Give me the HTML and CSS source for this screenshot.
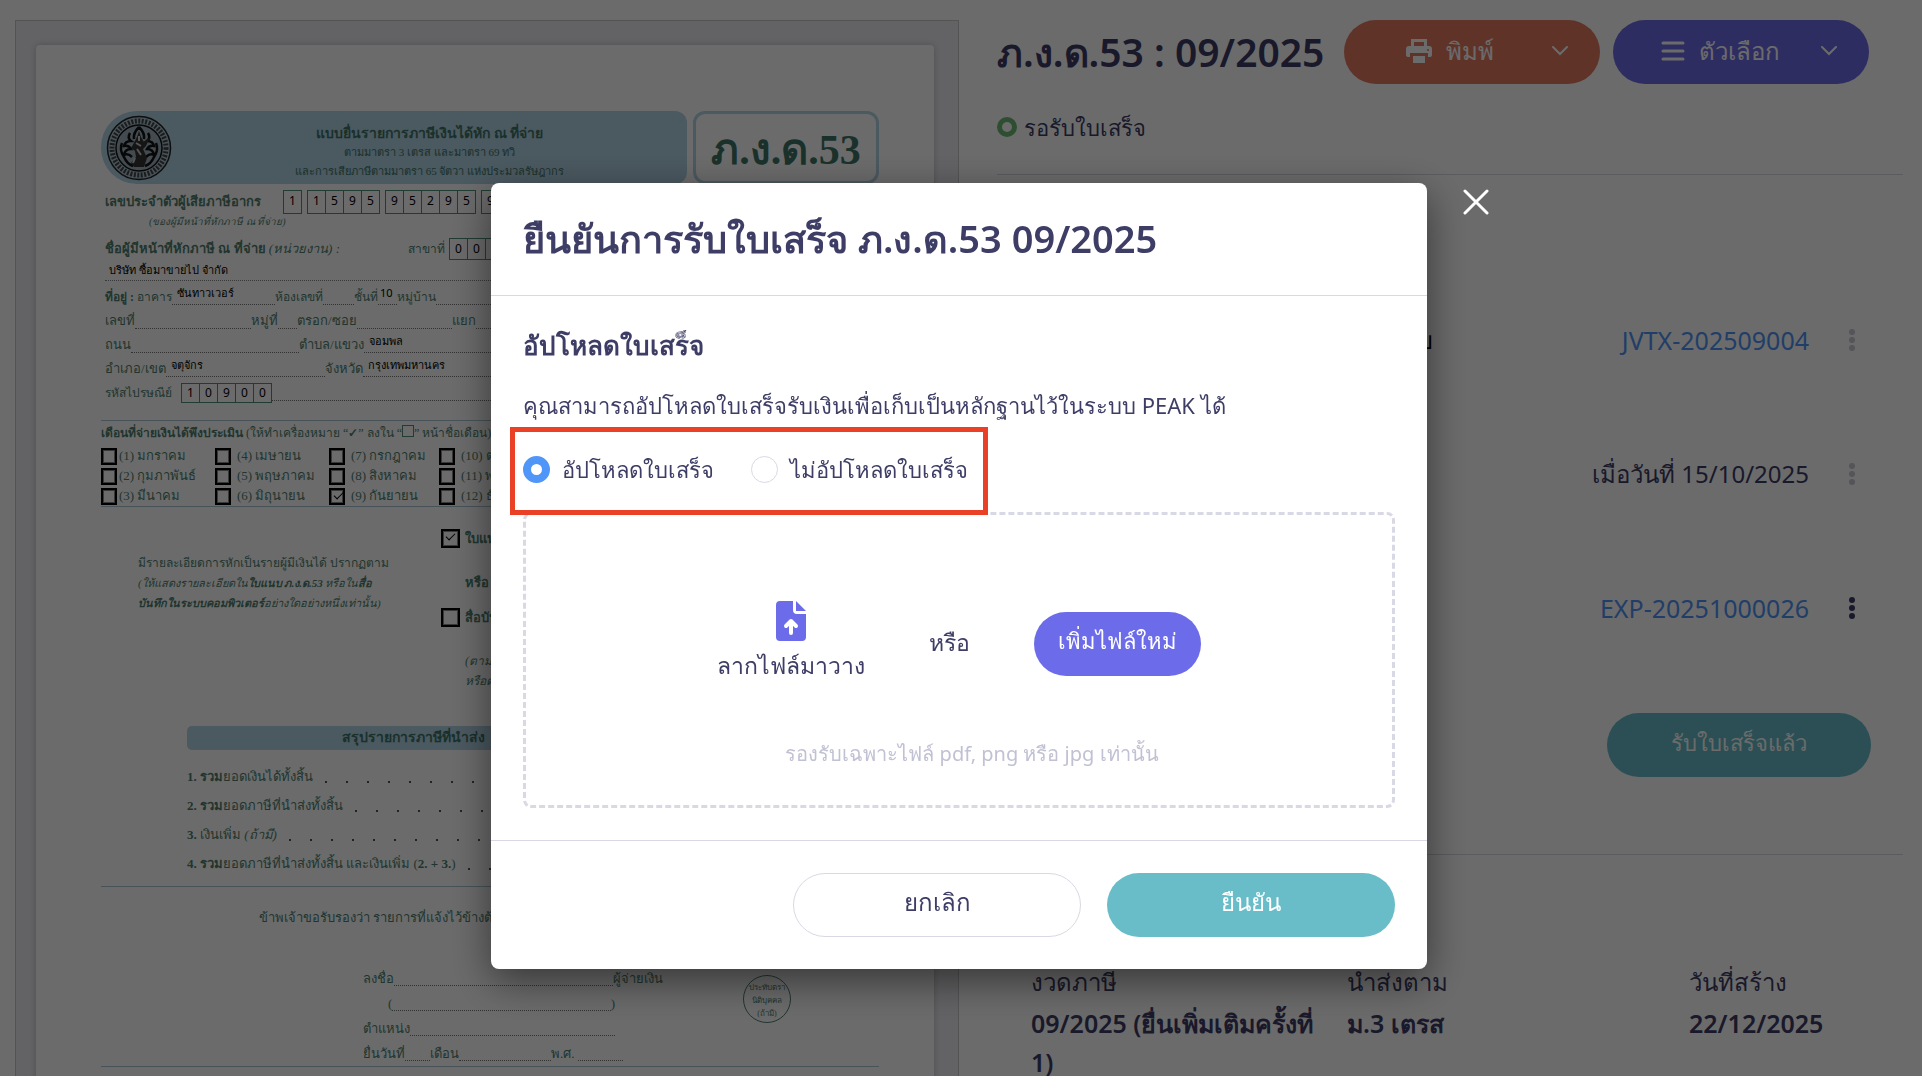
FILE: index.html
```
<!DOCTYPE html>
<html lang="th">
<head>
    <meta charset="UTF-8">
    <meta name="viewport" content="width=device-width, initial-scale=1.0">
    <title>ภ.ง.ด.53 : 09/2025</title>
    <link rel="stylesheet" href="styles.css">
</head>
<body>
    <div class="page">
        <!-- document preview -->
        <section class="preview">
            <div class="paper">
                <header class="form-head">
                    <div class="band">
                        <svg class="seal" viewBox="0 0 66 66">
                            <circle cx="33" cy="33" r="31.5" fill="#a9c6d4" stroke="#222" stroke-width="1.5"/>
                            <circle cx="33" cy="33" r="27" fill="none" stroke="#444" stroke-width="5" stroke-dasharray="2 1.5"/>
                            <circle cx="33" cy="33" r="23" fill="#9fb4c0" stroke="#111" stroke-width="1.5"/>
                            <path d="M33 12q-6 6-5 12M33 12q6 6 5 12M24 18q-3 5 1 8q-6 0-7 5q5-1 7 3q-6 0-7 6q4-2 8 2M42 18q3 5-1 8q6 0 7 5q-5-1-7 3q6 0 7 6q-4-2-8 2M16 28q-3 7 2 14q3 7 9 9M50 28q3 7-2 14q-3 7-9 9" fill="none" stroke="#111" stroke-width="2.5"/>
                            <path d="M31 22l2-6 2 6 3 5 6-5-4 9-3 3 4 9-3 9H28l-3-4 5-6-1-6-4-3 4-7z" fill="#333"/>
                            <path d="M33 21v5M30 28l5 3M31 34l4 6M29 43l-2 5" stroke="#ccc" stroke-width="2"/>
                        </svg>
                        <div class="band-text">
                            <strong>แบบยื่นรายการภาษีเงินได้หัก ณ ที่จ่าย</strong>
                            <span>ตามมาตรา 3 เตรส และมาตรา 69 ทวิ</span>
                            <span>และการเสียภาษีตามมาตรา 65 จัตวา แห่งประมวลรัษฎากร</span>
                        </div>
                    </div>
                    <div class="form-no">ภ.ง.ด.53</div>
                </header>

                <div class="tax-row">
                    <strong class="tax-label">เลขประจำตัวผู้เสียภาษีอากร</strong>
                    <div class="cells"><span>1</span></div>
                    <div class="cells"><span>1</span><span>5</span><span>9</span><span>5</span></div>
                    <div class="cells"><span>9</span><span>5</span><span>2</span><span>9</span><span>5</span></div>
                    <div class="cells"><span>9</span></div>
                </div>
                <em class="tax-note">(ของผู้มีหน้าที่หักภาษี ณ ที่จ่าย)</em>

                <div class="name-row">
                    <span class="name-label"><strong>ชื่อผู้มีหน้าที่หักภาษี ณ ที่จ่าย</strong> <em>(หน่วยงาน) :</em></span>
                    <span class="branch">สาขาที่</span>
                    <div class="cells"><span>0</span><span>0</span><span>0</span></div>
                </div>
                <div class="company">บริษัท ซื้อมาขายไป จำกัด</div>

                <div class="fields fields-building">
                    <div class="field"><span><strong>ที่อยู่ :</strong> อาคาร</span><i>ซันทาวเวอร์</i></div>
                    <div class="field"><span>ห้องเลขที่</span><i></i></div>
                    <div class="field"><span>ชั้นที่</span><i class="tight">10</i></div>
                    <div class="field"><span>หมู่บ้าน</span><i></i></div>
                </div>
                <div class="fields fields-number">
                    <div class="field"><span>เลขที่</span><i></i></div>
                    <div class="field"><span>หมู่ที่</span><i></i></div>
                    <div class="field"><span>ตรอก/ซอย</span><i></i></div>
                    <div class="field"><span>แยก</span><i></i></div>
                </div>
                <div class="fields fields-road">
                    <div class="field"><span>ถนน</span><i></i></div>
                    <div class="field"><span>ตำบล/แขวง</span><i>จอมพล</i></div>
                </div>
                <div class="fields fields-district">
                    <div class="field"><span>อำเภอ/เขต</span><i>จตุจักร</i></div>
                    <div class="field"><span>จังหวัด</span><i>กรุงเทพมหานคร</i></div>
                </div>
                <div class="fields fields-post">
                    <span>รหัสไปรษณีย์</span>
                    <div class="cells"><span>1</span><span>0</span><span>9</span><span>0</span><span>0</span></div>
                    <div class="field"><i></i></div>
                </div>

                <div class="months">
                    <p><strong>เดือนที่จ่ายเงินได้พึงประเมิน</strong> (ให้ทำเครื่องหมาย “<b>✓</b>” ลงใน “<span class="mini-box"></span>” หน้าชื่อเดือน) พ.ศ.</p>
                    <div class="month-grid">
                        <label><input type="checkbox">(1) มกราคม</label>
                        <label><input type="checkbox">(4) เมษายน</label>
                        <label><input type="checkbox">(7) กรกฎาคม</label>
                        <label><input type="checkbox">(10) ตุลาคม</label>
                        <label><input type="checkbox">(2) กุมภาพันธ์</label>
                        <label><input type="checkbox">(5) พฤษภาคม</label>
                        <label><input type="checkbox">(8) สิงหาคม</label>
                        <label><input type="checkbox">(11) พฤศจิกายน</label>
                        <label><input type="checkbox">(3) มีนาคม</label>
                        <label><input type="checkbox">(6) มิถุนายน</label>
                        <label><input type="checkbox" checked>(9) กันยายน</label>
                        <label><input type="checkbox">(12) ธันวาคม</label>
                    </div>
                </div>

                <div class="attach">
                    <div class="attach-info">
                        <p>มีรายละเอียดการหักเป็นรายผู้มีเงินได้ ปรากฏตาม</p>
                        <p class="small"><em>(ให้แสดงรายละเอียดใน<strong>ใบแนบ ภ.ง.ด.53</strong> หรือใน<strong>สื่อ</strong></em></p>
                        <p class="small"><em><strong>บันทึกในระบบคอมพิวเตอร์</strong>อย่างใดอย่างหนึ่งเท่านั้น)</em></p>
                    </div>
                    <div class="attach-list">
                        <label><input type="checkbox" checked><strong>ใบแนบ</strong></label>
                        <strong class="or">หรือ</strong>
                        <label><input type="checkbox"><strong>สื่อบันทึก</strong></label>
                        <em class="under">(ตามหนังสือ<br>หรือตาม</em>
                    </div>
                </div>

                <div class="summary">
                    <h3>สรุปรายการภาษีที่นำส่ง</h3>
                    <p><span><strong>1. รวม</strong>ยอดเงินได้ทั้งสิ้น</span><i class="dots"></i></p>
                    <p><span><strong>2. รวม</strong>ยอดภาษีที่นำส่งทั้งสิ้น</span><i class="dots"></i></p>
                    <p><span><strong>3.</strong> เงินเพิ่ม <em>(ถ้ามี)</em></span><i class="dots"></i></p>
                    <p><span><strong>4. รวม</strong>ยอดภาษีที่นำส่งทั้งสิ้น และเงินเพิ่ม (<strong>2. + 3.</strong>)</span><i class="dots"></i></p>
                </div>

                <div class="certify">
                    <p>ข้าพเจ้าขอรับรองว่า รายการที่แจ้งไว้ข้างต้น</p>
                    <div class="signing">
                        <div class="sign-lines">
                            <div class="field payer"><span>ลงชื่อ</span><i></i><span>ผู้จ่ายเงิน</span></div>
                            <div class="field bracket"><span>(</span><i></i><span>)</span></div>
                            <div class="field position"><span>ตำแหน่ง</span><i></i></div>
                            <div class="filing">
                                <div class="field"><span>ยื่นวันที่</span><i></i></div>
                                <div class="field"><span>เดือน</span><i></i></div>
                                <div class="field"><span>พ.ศ.&nbsp;</span><i></i></div>
                            </div>
                        </div>
                        <div class="stamp">ประทับตรา<br>นิติบุคคล<br>(ถ้ามี)</div>
                    </div>
                </div>
            </div>
        </section>

        <!-- document details -->
        <section class="detail">
            <div class="top">
                <div class="titles">
                    <h1>ภ.ง.ด.53 : 09/2025</h1>
                    <div class="status"><span class="ring"></span>รอรับใบเสร็จ</div>
                </div>
                <div class="actions">
                    <button type="button" class="btn btn-print">
                        <svg width="26" height="24" viewBox="0 0 26 24"><path d="M5 0h16v8h-3V3H8v5H5zM3 7h20q3 0 3 3v6q0 2-3 2h-1v-4H4v4H3q-3 0-3-2v-6q0-3 3-3zM7 17h12v7H7z" fill="currentColor"/><circle cx="22" cy="11" r="1" fill="#e57a62"/></svg>
                        <span>พิมพ์</span>
                        <svg class="chev" width="16" height="10" viewBox="0 0 16 10"><path d="M1 1l7 7 7-7" fill="none" stroke="currentColor" stroke-width="2" stroke-linecap="round"/></svg>
                    </button>
                    <button type="button" class="btn btn-option">
                        <svg width="24" height="20" viewBox="0 0 24 20"><path d="M2 2h20M2 10h20M2 18h20" stroke="currentColor" stroke-width="3" stroke-linecap="round"/></svg>
                        <span>ตัวเลือก</span>
                        <svg class="chev" width="16" height="10" viewBox="0 0 16 10"><path d="M1 1l7 7 7-7" fill="none" stroke="currentColor" stroke-width="2" stroke-linecap="round"/></svg>
                    </button>
                </div>
            </div>

            <div class="steps">
                <div class="step">
                    <span class="step-name">ย</span>
                    <a href="#">JVTX-202509004</a>
                    <button type="button" class="more" aria-label="เพิ่มเติม" disabled><svg width="6" height="22" viewBox="0 0 6 22"><circle cx="3" cy="3" r="3"/><circle cx="3" cy="11" r="3"/><circle cx="3" cy="19" r="3"/></svg></button>
                </div>
                <div class="step">
                    <span>เมื่อวันที่ 15/10/2025</span>
                    <button type="button" class="more" aria-label="เพิ่มเติม" disabled><svg width="6" height="22" viewBox="0 0 6 22"><circle cx="3" cy="3" r="3"/><circle cx="3" cy="11" r="3"/><circle cx="3" cy="19" r="3"/></svg></button>
                </div>
                <div class="step">
                    <a href="#">EXP-20251000026</a>
                    <button type="button" class="more" aria-label="เพิ่มเติม"><svg width="6" height="22" viewBox="0 0 6 22"><circle cx="3" cy="3" r="3"/><circle cx="3" cy="11" r="3"/><circle cx="3" cy="19" r="3"/></svg></button>
                </div>
                <button type="button" class="btn btn-received">รับใบเสร็จแล้ว</button>
            </div>

            <dl class="info">
                <div><dt>งวดภาษี</dt><dd>09/2025 (ยื่นเพิ่มเติมครั้งที่ 1)</dd></div>
                <div><dt>นำส่งตาม</dt><dd>ม.3 เตรส</dd></div>
                <div><dt>วันที่สร้าง</dt><dd>22/12/2025</dd></div>
            </dl>
        </section>
    </div>

    <!-- receipt confirm popup -->
    <div class="overlay">
        <div class="modal" role="dialog" aria-labelledby="modal-title">
            <button type="button" class="close" aria-label="ปิด">
                <svg width="26" height="26" viewBox="0 0 26 26"><path d="M2 2l22 22M24 2L2 24" stroke="#fff" stroke-width="3" stroke-linecap="round"/></svg>
            </button>
            <div class="modal-head">
                <h2 id="modal-title">ยืนยันการรับใบเสร็จ ภ.ง.ด.53 09/2025</h2>
            </div>
            <form class="modal-body" action="#">
                <h3>อัปโหลดใบเสร็จ</h3>
                <p>คุณสามารถอัปโหลดใบเสร็จรับเงินเพื่อเก็บเป็นหลักฐานไว้ในระบบ PEAK ได้</p>
                <div class="choices">
                    <label for="upload"><input type="radio" name="receipt" id="upload" checked>อัปโหลดใบเสร็จ</label>
                    <label for="noupload"><input type="radio" name="receipt" id="noupload">ไม่อัปโหลดใบเสร็จ</label>
                </div>
                <div class="dropzone">
                    <div class="drop-row">
                        <div class="drag">
                            <svg width="30" height="40" viewBox="0 0 30 40"><path d="M4 0h13v9q0 4 4 4h9v23q0 4-4 4H4q-4 0-4-4V4q0-4 4-4z" fill="#6c6cea"/><path d="M20 0l10 10H20z" fill="#6c6cea"/><path d="M15 32V20M10 25l5-5 5 5" fill="none" stroke="#fff" stroke-width="4" stroke-linecap="round" stroke-linejoin="round"/></svg>
                            <span>ลากไฟล์มาวาง</span>
                        </div>
                        <span>หรือ</span>
                        <button type="button" class="btn btn-file">เพิ่มไฟล์ใหม่</button>
                    </div>
                    <small>รองรับเฉพาะไฟล์ pdf, png หรือ jpg เท่านั้น</small>
                </div>
            </form>
            <div class="modal-foot">
                <button type="button" class="btn btn-cancel">ยกเลิก</button>
                <button type="button" class="btn btn-confirm">ยืนยัน</button>
            </div>
        </div>
    </div>
</body>
</html>
```
FILE: styles.css
```
*, *::before, *::after {
    box-sizing: border-box;
}

body {
    margin: 0;
    height: 100vh;
    overflow: hidden;
    background-color: white;
    color: #3d3d66;
    font-family: "Noto Sans", sans-serif;
    font-size: 22px;
    line-height: 36px;
}

h1, h2, h3, p, dl, dd {
    margin: 0;
}

a {
    color: #5095f8;
    text-decoration: none;
}

button {
    font-family: inherit;
    font-size: inherit;
    line-height: inherit;
    padding: 0;
    border: none;
    background: none;
}

.btn {
    height: 64px;
    border-radius: 32px;
    color: white;
    padding-bottom: 6px;
}

.page {
    display: grid;
    grid-template-columns: 944fr 906fr;
    gap: 38px;
    padding: 20px 19px 0 15px;
    height: 100vh;
    overflow: hidden;
}

/* preview */
.preview {
    border: 1px solid #c8c8c8;
    background-color: #ebebf0;
    padding: 24px 24px 0 20px;
    overflow: hidden;
}

.paper {
    background-color: white;
    border-radius: 4px;
    box-shadow: 0 0 6px rgba(0, 0, 0, 0.2);
    padding: 66px 55px 60px 65px;
    color: #4f7f6f;
    font-family: "Liberation Serif", serif;
    font-size: 13px;
    line-height: 20px;
    white-space: nowrap;
}

.form-head {
    display: flex;
    gap: 6px;
    height: 73px;
}

.band {
    flex: 1;
    display: flex;
    align-items: center;
    padding-left: 5px;
    background-color: #b2d3e4;
    border-radius: 36px 12px 12px 36px;
}

.seal {
    width: 66px;
    height: 66px;
}

.band-text {
    flex: 1;
    display: flex;
    flex-direction: column;
    padding-top: 10px;
    text-align: center;
    font-size: 11px;
    line-height: 19px;
    color: #3f7567;
}

.band-text strong {
    font-size: 14px;
}

.form-no {
    width: 186px;
    border: 3px solid #b2d3e4;
    border-radius: 12px;
    text-align: center;
    font-size: 42px;
    font-weight: bold;
    line-height: 72px;
    color: #3f7567;
}

.cells {
    display: flex;
    border: 1px solid #4f8f78;
    color: black;
    font-family: "Noto Sans", sans-serif;
    font-size: 12px;
}

.cells span {
    width: 17px;
    text-align: center;
}

.cells span + span {
    width: 18px;
    border-left: 1px solid #4f8f78;
}

.tax-row {
    display: flex;
    gap: 5px;
    padding: 6px 0 0 4px;
}

.tax-label {
    width: 173px;
    line-height: 24px;
}

.tax-note {
    display: block;
    padding-left: 48px;
    font-size: 10px;
    line-height: 16px;
}

.name-row {
    display: flex;
    align-items: center;
    padding: 8px 0 0 4px;
    overflow: hidden;
}

.name-label {
    width: 303px;
}

.branch {
    width: 41px;
    font-size: 12px;
}

.company {
    margin-left: 4px;
    margin-bottom: 2px;
    padding-left: 4px;
    border-bottom: 1px dotted #888;
    color: black;
    font-family: "Noto Sans", sans-serif;
    font-size: 11px;
}

.fields {
    display: grid;
    padding: 4px 0 0 4px;
}

.fields-building {
    grid-template-columns: 170px 79px 43px 1fr;
}

.fields-number {
    grid-template-columns: 146px 46px 155px 1fr;
}

.fields-road {
    grid-template-columns: 194px 1fr;
}

.fields-district {
    grid-template-columns: 220px 1fr;
}

.fields-post {
    grid-template-columns: 76px 90px 1fr;
    font-size: 12px;
}

.fields-post .cells {
    justify-self: start;
    line-height: 18px;
}

.field {
    display: flex;
}

.field i {
    flex: 1;
    height: 18px;
    border-bottom: 1px dotted #777;
    padding-left: 5px;
    color: black;
    font-family: "Noto Sans", sans-serif;
    font-size: 11px;
    font-style: normal;
    line-height: 12px;
}

.field .tight {
    padding-left: 2px;
}

.fields-building .field {
    font-size: 12px;
}

.months {
    margin-top: 17px;
    border-top: 1px solid #a9c6d4;
    border-bottom: 1px solid #a9c6d4;
}

.months p {
    font-size: 12px;
    line-height: 25px;
}

.mini-box {
    display: inline-block;
    width: 12px;
    height: 12px;
    border: 1px solid #4f8f78;
}

.month-grid {
    display: grid;
    grid-template-columns: 114px 114px 110px 1fr;
}

.month-grid label {
    display: flex;
    align-items: center;
    gap: 6px;
    height: 20px;
}

.month-grid label:nth-child(4n + 1) {
    gap: 2px;
}

.paper input {
    appearance: none;
    position: relative;
    width: 16px;
    height: 17px;
    margin: 0;
    border: 2px solid black;
    outline: 1px solid #888;
    outline-offset: -3px;
}

/* tick */
.paper input:checked::after {
    content: "";
    position: absolute;
    top: 2px;
    left: 3px;
    width: 9px;
    height: 5px;
    border-left: 1px solid black;
    border-bottom: 1px solid black;
    transform: rotate(-45deg);
}

.attach {
    display: grid;
    grid-template-columns: 340px 1fr;
    padding-top: 22px;
}

.attach-info {
    padding: 24px 0 0 37px;
    font-size: 12px;
}

.attach-info .small {
    font-size: 11px;
}

.attach-list {
    display: flex;
    flex-direction: column;
}

.attach-list label {
    display: flex;
    gap: 5px;
}

.attach-list input {
    width: 19px;
    height: 19px;
}

.attach-list .or {
    padding: 24px 0 15px 24px;
}

.attach-list .under {
    padding: 23px 0 0 24px;
    font-size: 12px;
}

.summary {
    margin-top: 35px;
    padding: 0 86px 8px;
    border-bottom: 1px solid #a9c6d4;
}

.summary h3 {
    margin-bottom: 12px;
    padding-left: 155px;
    background-color: #b2d3e4;
    border-radius: 5px;
    color: #3f7567;
    font-size: 14px;
    line-height: 24px;
}

.summary p {
    display: flex;
    line-height: 29px;
}

.dots {
    flex: 1;
    margin-left: 12px;
    background: radial-gradient(circle at 1px 1px, #555 1px, transparent 1px) 0 19px / 21px 29px repeat-x;
}

.certify {
    border-bottom: 1px solid #a9c6d4;
}

.certify p {
    padding: 21px 0 0 158px;
}

.signing {
    display: flex;
    justify-content: space-between;
    padding: 38px 88px 0 262px;
}

.sign-lines {
    line-height: 25px;
}

.sign-lines .field i {
    height: 20px;
}

.payer {
    width: 300px;
}

.bracket {
    width: 227px;
    margin-left: 25px;
}

.position {
    width: 252px;
}

.filing {
    display: grid;
    grid-template-columns: 67px 121px 72px;
}

.stamp {
    width: 48px;
    height: 48px;
    margin-top: 9px;
    padding-top: 5px;
    border: 1px solid #4f7f6f;
    border-radius: 50%;
    display: flex;
    justify-content: center;
    text-align: center;
    font-size: 8px;
    line-height: 13px;
}

/* detail */
.top {
    display: flex;
    justify-content: space-between;
    height: 155px;
    padding-right: 34px;
    border-bottom: 1px solid #d9d9e3;
    white-space: nowrap;
}

h1 {
    font-size: 39px;
    font-weight: 600;
    line-height: 64px;
}

.status {
    display: flex;
    align-items: center;
    gap: 7px;
    margin-top: 25px;
}

.ring {
    width: 20px;
    height: 20px;
    border: 5px solid #6bbb75;
    border-radius: 50%;
}

.actions {
    display: flex;
    gap: 13px;
}

.actions .btn {
    display: flex;
    align-items: center;
    width: 256px;
    padding: 0 32px 2px 62px;
    font-size: 24px;
}

.actions span {
    margin-left: 14px;
}

.actions .chev {
    margin-left: auto;
}

.actions .btn-option {
    padding-left: 48px;
}

.btn-print {
    background-color: #e57a62;
}

.btn-option, .btn-file {
    background-color: #6c6cea;
}

.steps {
    display: flex;
    flex-direction: column;
    padding: 147px 32px 77px 0;
    border-bottom: 1px solid #d9d9e3;
}

.step {
    display: flex;
    justify-content: flex-end;
    align-items: center;
    gap: 40px;
    padding-right: 16px;
    margin-bottom: 98px;
    font-size: 24px;
}

.step a {
    font-size: 25px;
}

.step-name {
    margin-right: auto;
    padding-left: 422px;
    color: black;
}

.step:nth-child(3) {
    margin-bottom: 87px;
}

.more {
    display: flex;
    fill: #3d3d66;
}

.more:disabled {
    fill: #c8c8d4;
}

.btn-received {
    width: 264px;
    align-self: flex-end;
    background-color: #68bdc8;
}

.info {
    display: grid;
    grid-template-columns: 286px 312px 1fr;
    column-gap: 30px;
    padding: 107px 0 0 34px;
    line-height: 39px;
}

.info dt {
    padding-bottom: 3px;
    font-size: 24px;
}

.info dd {
    font-size: 25px;
    font-weight: 600;
}

/* popup */
.overlay {
    position: fixed;
    inset: 0;
    display: flex;
    justify-content: center;
    align-items: flex-start;
    padding: 183px 4px 0 0;
    background-color: rgba(0, 0, 0, 0.58);
}

.modal {
    position: relative;
    width: 936px;
    max-width: 90%;
    background-color: white;
    border-radius: 8px;
    box-shadow: 0 12px 40px rgba(0, 0, 0, 0.5);
    white-space: nowrap;
}

.close {
    position: absolute;
    top: 6px;
    right: -62px;
    display: flex;
}

.modal-head {
    padding: 23px 32px 25px;
    border-bottom: 1px solid #d9d9e6;
}

.modal-head h2 {
    font-size: 38px;
    font-weight: 600;
    line-height: 64px;
}

.modal-body {
    padding: 31px 32px 32px;
}

.modal-body h3 {
    font-size: 26px;
    font-weight: 600;
}

.modal-body p {
    margin-top: 24px;
}

.choices {
    position: relative;
    display: flex;
    gap: 37px;
    padding: 28px 0 25px;
}

/* highlight around the two options */
.choices::after {
    content: "";
    position: absolute;
    top: 4px;
    left: -13px;
    width: 478px;
    height: 88px;
    border: 5px solid #ea4025;
    pointer-events: none;
}

.choices label {
    display: flex;
    align-items: center;
    gap: 12px;
}

.choices input {
    appearance: none;
    width: 27px;
    height: 27px;
    margin: 0;
    border: 1px solid #d9d9e6;
    border-radius: 50%;
}

.choices input:checked {
    border: 8px solid #5095f8;
}

.dropzone {
    display: flex;
    flex-direction: column;
    align-items: center;
    height: 296px;
    padding-top: 86px;
    border: 3px dashed #d9d9e6;
    border-radius: 8px;
}

.drop-row {
    display: flex;
    align-items: center;
    gap: 64px;
    font-size: 23px;
}

.drag {
    display: flex;
    flex-direction: column;
    align-items: center;
    gap: 6px;
}

.btn-file {
    margin-top: 4px;
    padding: 0 24px 8px;
    font-size: 22px;
}

.dropzone small {
    margin: 53px 0 0 26px;
    color: #c1c1d4;
    font-size: 20px;
}

.modal-foot {
    display: flex;
    justify-content: flex-end;
    gap: 26px;
    padding: 32px;
    border-top: 1px solid #d9d9e6;
    font-size: 24px;
}

.modal-foot .btn {
    width: 288px;
}

.modal-foot .btn-cancel {
    border: 1px solid #d9d9e6;
    color: #3d3d66;
}

.btn-confirm {
    background-color: #68bdc8;
}
```
